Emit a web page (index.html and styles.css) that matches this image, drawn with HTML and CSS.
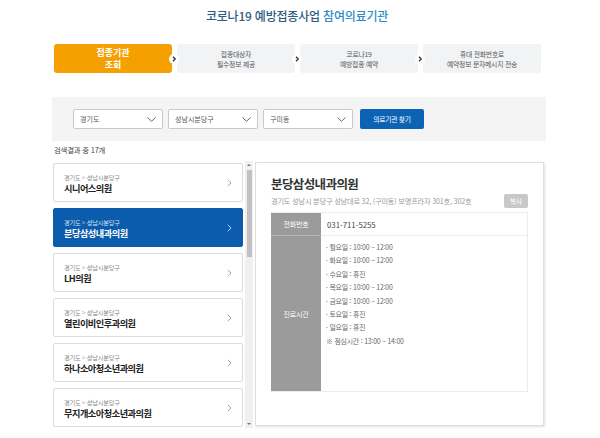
FILE: index.html
```html
<!DOCTYPE html>
<html lang="ko">
<head>
<meta charset="utf-8">
<title>코로나19 예방접종사업 참여의료기관</title>
<link rel="stylesheet" href="styles.css">
</head>
<body>
<div class="page">
  <h1 class="title"><span class="t1">코로나19 예방접종사업</span> <span class="t2">참여의료기관</span></h1>

  <ol class="steps">
    <li class="step active"><span>접종기관<br>조회</span><i class="arr"><svg width="10" height="10" viewBox="0 0 10 10"><path d="M4 2.8 L6.2 5 L4 7.2" fill="none" stroke="#333" stroke-width="1.3"/></svg></i></li>
    <li class="step"><span>접종대상자<br>필수정보 제공</span><i class="arr"><svg width="10" height="10" viewBox="0 0 10 10"><path d="M4 2.8 L6.2 5 L4 7.2" fill="none" stroke="#333" stroke-width="1.3"/></svg></i></li>
    <li class="step"><span>코로나19<br>예방접종 예약</span><i class="arr"><svg width="10" height="10" viewBox="0 0 10 10"><path d="M4 2.8 L6.2 5 L4 7.2" fill="none" stroke="#333" stroke-width="1.3"/></svg></i></li>
    <li class="step"><span>휴대 전화번호로<br>예약정보 문자메시지 전송</span></li>
  </ol>

  <div class="filter">
    <div class="select"><span>경기도</span><svg width="9" height="5" viewBox="0 0 9 5"><path d="M0.5 0.5 L4.5 4.3 L8.5 0.5" fill="none" stroke="#666" stroke-width="1"/></svg></div>
    <div class="select"><span>성남시분당구</span><svg width="9" height="5" viewBox="0 0 9 5"><path d="M0.5 0.5 L4.5 4.3 L8.5 0.5" fill="none" stroke="#666" stroke-width="1"/></svg></div>
    <div class="select"><span>구미동</span><svg width="9" height="5" viewBox="0 0 9 5"><path d="M0.5 0.5 L4.5 4.3 L8.5 0.5" fill="none" stroke="#666" stroke-width="1"/></svg></div>
    <button class="search" type="button">의료기관 찾기</button>
  </div>

  <p class="count">검색결과 중 17개</p>

  <div class="results">
    <div class="list-wrap">
      <ul class="list">
        <li class="item"><div class="info"><span class="loc">경기도 &gt; 성남시분당구</span><strong class="name">시니어스의원</strong></div><svg class="go" width="5" height="8" viewBox="0 0 5 8"><path d="M0.8 0.8 L4 4 L0.8 7.2" fill="none" stroke="#999" stroke-width="0.9"/></svg></li>
        <li class="item on"><div class="info"><span class="loc">경기도 &gt; 성남시분당구</span><strong class="name">분당삼성내과의원</strong></div><svg class="go" width="5" height="8" viewBox="0 0 5 8"><path d="M0.8 0.8 L4 4 L0.8 7.2" fill="none" stroke="#cfe0f3" stroke-width="0.9"/></svg></li>
        <li class="item"><div class="info"><span class="loc">경기도 &gt; 성남시분당구</span><strong class="name">LH의원</strong></div><svg class="go" width="5" height="8" viewBox="0 0 5 8"><path d="M0.8 0.8 L4 4 L0.8 7.2" fill="none" stroke="#999" stroke-width="0.9"/></svg></li>
        <li class="item"><div class="info"><span class="loc">경기도 &gt; 성남시분당구</span><strong class="name">열린이비인후과의원</strong></div><svg class="go" width="5" height="8" viewBox="0 0 5 8"><path d="M0.8 0.8 L4 4 L0.8 7.2" fill="none" stroke="#999" stroke-width="0.9"/></svg></li>
        <li class="item"><div class="info"><span class="loc">경기도 &gt; 성남시분당구</span><strong class="name">하나소아청소년과의원</strong></div><svg class="go" width="5" height="8" viewBox="0 0 5 8"><path d="M0.8 0.8 L4 4 L0.8 7.2" fill="none" stroke="#999" stroke-width="0.9"/></svg></li>
        <li class="item"><div class="info"><span class="loc">경기도 &gt; 성남시분당구</span><strong class="name">무지개소아청소년과의원</strong></div><svg class="go" width="5" height="8" viewBox="0 0 5 8"><path d="M0.8 0.8 L4 4 L0.8 7.2" fill="none" stroke="#999" stroke-width="0.9"/></svg></li>
      </ul>
      <div class="scrollbar"><span class="up"></span><span class="thumb"></span><span class="down"></span></div>
    </div>

    <section class="detail">
      <h2 class="d-name">분당삼성내과의원</h2>
      <div class="d-addr">
        <span>경기도 성남시 분당구 성남대로 32, (구미동) 보명프라자 301호, 302호</span>
        <button class="copy" type="button">복사</button>
      </div>
      <div class="d-table">
        <div class="th">전화번호</div>
        <div class="td phone">031-711-5255</div>
        <div class="th">진료시간</div>
        <div class="td hours">
          <p>· 월요일 : 10:00 ~ 12:00</p>
          <p>· 화요일 : 10:00 ~ 12:00</p>
          <p>· 수요일 : 휴진</p>
          <p>· 목요일 : 10:00 ~ 12:00</p>
          <p>· 금요일 : 10:00 ~ 12:00</p>
          <p>· 토요일 : 휴진</p>
          <p>· 일요일 : 휴진</p>
          <p>※ 점심시간 : 13:00 ~ 14:00</p>
        </div>
      </div>
    </section>
  </div>
</div>
<div class="footer-line"></div>
</body>
</html>
```

FILE: styles.css
```css
* { box-sizing: border-box; }
html, body { margin: 0; padding: 0; background: #fff; }
body {
  font-family: "Noto Sans CJK KR", "Noto Sans", sans-serif;
  color: #333;
  width: 600px;
  height: 438px;
  overflow: hidden;
}
.page {
  width: 490px;
  margin-left: 54px;
}
.title {
  margin: 0 0 0 -4px;
  padding-top: 8px;
  line-height: 16px;
  font-size: 12px;
  font-weight: 500;
  text-align: center;
  letter-spacing: -0.2px;
}
.t1 { color: #2f5c80; }
.t2 { color: #2e8ccc; }

.steps {
  list-style: none;
  margin: 20px 0 0;
  padding: 0;
  display: flex;
  gap: 5px;
  height: 29px;
}
.step {
  position: relative;
  flex: 0 0 118px;
  background: #f2f3f5;
  border-radius: 3px;
  display: flex;
  align-items: center;
  justify-content: center;
  text-align: center;
  font-size: 6.8px;
  line-height: 10px;
  color: #555;
  letter-spacing: -0.2px;
}
.step.active {
  background: #f5a000;
  color: #fff;
  font-size: 9px;
  line-height: 12px;
  font-weight: 700;
  letter-spacing: 0;
}
.arr {
  position: absolute;
  right: -7px;
  top: 50%;
  margin-top: -5px;
  width: 10px;
  height: 10px;
  border-radius: 50%;
  background: #fff;
  display: block;
  z-index: 2;
}
.arr svg { display: block; }

.filter {
  margin: 24px 0 0 -2px;
  width: 494px;
  height: 44px;
  background: #f4f4f4;
  display: flex;
  align-items: center;
  gap: 5px;
  padding: 0 0 0 21px;
}
.select {
  width: 90px;
  height: 20px;
  background: #fff;
  border: 1px solid #c9c9c9;
  border-radius: 2px;
  display: flex;
  align-items: center;
  justify-content: space-between;
  padding: 0 6px 0 6px;
  font-size: 7px;
  color: #555;
}
.select svg { display: block; }
.search {
  margin-left: 2px;
  width: 64px;
  height: 20px;
  border: 0;
  border-radius: 2px;
  background: #0c63b4;
  color: #fff;
  font-family: inherit;
  font-size: 6.8px;
  letter-spacing: -0.3px;
  padding: 0;
}

.count {
  margin: 4px 0 0;
  line-height: 10px;
  font-size: 7.4px;
  color: #444;
  letter-spacing: -0.2px;
}

.results {
  margin-top: 6px;
  display: flex;
  height: 268px;
}
.list-wrap {
  display: flex;
  gap: 2px;
  margin-left: -1px;
}
.list {
  list-style: none;
  margin: 0;
  padding: 2px 0 0;
  width: 190px;
  display: flex;
  flex-direction: column;
  gap: 6px;
}
.item {
  height: 39px;
  border: 1px solid #dcdcdc;
  border-radius: 2px;
  background: #fff;
  display: flex;
  align-items: center;
  justify-content: space-between;
  padding: 0 10px 0 10px;
}
.item .info {
  display: flex;
  flex-direction: column;
  padding-top: 1px;
}
.loc {
  font-size: 6.2px;
  line-height: 9px;
  color: #888;
  letter-spacing: -0.2px;
}
.name {
  font-size: 9.2px;
  line-height: 12px;
  color: #222;
  font-weight: 700;
  letter-spacing: -0.5px;
}
.item.on {
  background: #0c5cad;
  border-color: #0c5cad;
}
.item.on .loc { color: #d6e4f4; }
.item.on .name { color: #fff; }
.go { display: block; }

.scrollbar {
  width: 8px;
  height: 267px;
  background: #f0f0f0;
  display: flex;
  flex-direction: column;
  align-items: center;
  padding-top: 2px;
}
.up, .down {
  width: 0;
  height: 0;
  border-left: 2px solid transparent;
  border-right: 2px solid transparent;
  margin-top: 1px;
}
.up { border-bottom: 2px solid #777; }
.down { border-top: 2px solid #777; margin-top: auto; margin-bottom: 3px; }
.thumb {
  width: 5px;
  height: 87px;
  margin-top: 4px;
  background: #c1c1c1;
}

.detail {
  margin: 1px 0 0 2px;
  width: 289px;
  height: 264px;
  border: 1px solid #dedede;
  box-shadow: 1px 1px 2px rgba(0,0,0,0.12);
  padding: 14px 15px 0 15px;
}
.d-name {
  margin: 0;
  font-size: 12.5px;
  line-height: 14px;
  font-weight: 700;
  color: #333;
  letter-spacing: -0.6px;
}
.d-addr {
  margin-top: 3px;
  display: flex;
  align-items: center;
  justify-content: space-between;
  height: 14px;
  font-size: 7.2px;
  color: #9a9a9a;
  letter-spacing: -0.2px;
}
.copy {
  width: 24px;
  height: 14px;
  border: 0;
  border-radius: 2px;
  background: #c8c8c8;
  color: #fff;
  font-family: inherit;
  font-size: 6.5px;
  padding: 0;
}
.d-table {
  margin-top: 4px;
  display: grid;
  grid-template-columns: 50px 1fr;
  grid-template-rows: 23px 155px;
  border: 1px solid #ececec;
  border-left: 0;
}
.th {
  background: #9b9b9b;
  color: #fff;
  font-size: 7px;
  display: flex;
  align-items: center;
  justify-content: center;
  letter-spacing: -0.2px;
}
.th:first-child { border-bottom: 1px solid #b5b5b5; }
.td {
  background: #fff;
}
.phone {
  display: flex;
  align-items: center;
  padding-left: 6px;
  font-size: 7.8px;
  color: #444;
  border-bottom: 1px solid #ececec;
}
.hours {
  padding: 5px 0 0 5px;
}
.hours p {
  margin: 0;
  font-size: 6.9px;
  line-height: 13.4px;
  color: #666;
  letter-spacing: -0.2px;
}

.footer-line {
  margin-top: 9px;
  border-top: 1px solid #ececec;
  width: 600px;
}
```
